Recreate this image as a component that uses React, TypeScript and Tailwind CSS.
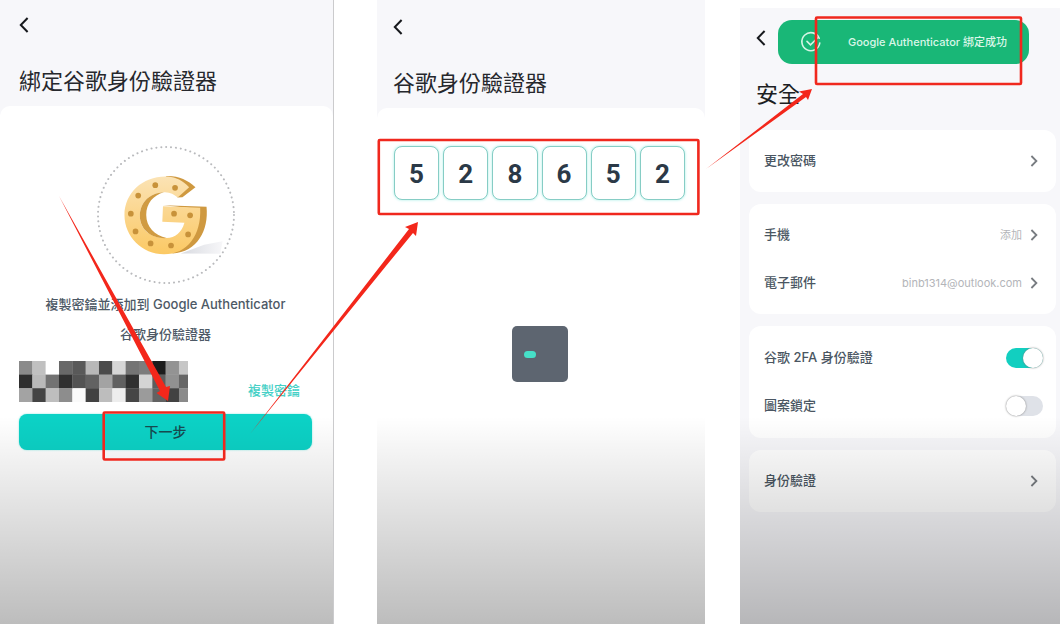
import { useState } from "react";

const studs = [
  [224, 151], [283, 159], [173, 182], [151, 236], [165, 289],
  [210, 325], [271, 331], [322, 298], [328, 241], [280, 236],
];

const mosaic = [
  ["#8a8a8a", "#c0c0c0", "#ffffff", "#686868", "#595959", "#b8b8b8", "#4b4b4b", "#d6d6d6", "#747474", "#7c7c7c", "#1c1c1c", "#939393", "#c6c6c6"],
  ["#2e2e2e", "#b9b9b9", "#727272", "#303030", "#535353", "#626262", "#a3a3a3", "#616161", "#303030", "#d4d4d4", "#5d5d5d", "#919191", "#666666"],
  ["#a3a3a3", "#444444", "#bebebe", "#8d8d8d", "#fafafa", "#424242", "#bdbdbd", "#ededed", "#464646", "#9b9b9b", "#626262", "#424242", "#8a8a8a"],
];

function BackButton() {
  return (
    <button type="button" aria-label="返回" className="block h-5 w-5">
      <svg viewBox="0 0 20 20" className="h-5 w-5" fill="none" stroke="#17191d" strokeWidth="2">
        <path d="M8.6 3 1.8 10l6.8 7" />
      </svg>
    </button>
  );
}

function Chevron() {
  return (
    <svg viewBox="0 0 8 12" className="h-3 w-2" fill="none" stroke="#777b80" strokeWidth="1.8" aria-hidden="true">
      <path d="m1.4 1 5 5-5 5" />
    </svg>
  );
}

function Shade() {
  return (
    <div className="pointer-events-none absolute inset-x-0 bottom-0 h-[208px] bg-linear-to-b from-black/0 to-black/26" />
  );
}

function GoogleBadge() {
  return (
    <svg viewBox="50 34 412 412" className="h-[138px] w-[138px]" role="img" aria-label="Google">
      <defs>
        <linearGradient id="face" x1="0" y1="0" x2="0" y2="1">
          <stop offset="0" stopColor="#fbe3b5" />
          <stop offset="0.5" stopColor="#fbd58b" />
          <stop offset="1" stopColor="#fbc964" />
        </linearGradient>
        <linearGradient id="cast" x1="0" y1="0" x2="1" y2="0">
          <stop offset="0" stopColor="#d8dae0" />
          <stop offset="1" stopColor="#f7f7f9" />
        </linearGradient>
      </defs>
      <circle cx="256" cy="240" r="203" fill="none" stroke="#b9babd" strokeWidth="6" strokeLinecap="round" strokeDasharray="0.1 14.6" />
      <path d="M300 355 L370 329 L425 318 L418 356 Z" fill="url(#cast)" />
      <path d="M255 124 C292 122 320 136 344 157 L305 187 L290 188 L300 160 Z" fill="#cf9940" />
      <path d="M247 211 L377 215 C384 285 350 350 275 355 L330 290 L355 222 Z" fill="#cf9940" />
      <path d="M262 125 C190 121 132 172 132 240 C132 305 185 357 250 357 C320 357 362 300 358 218 L247 214 L245 260 L311 263 C303 292 283 308 258 309 C212 310 178 285 178 243 C178 205 205 174 250 172 C267 171 280 178 291 188 L325 157 C305 137 286 127 262 125 Z" fill="url(#face)" />
      <path d="M250 172 C205 174 178 205 178 243 C178 285 215 312 258 309 C222 301 197 275 197 240 C197 205 218 181 250 172 Z" fill="#d09b42" />
      {studs.map(([x, y]) => (
        <circle key={`${x}-${y}`} cx={x} cy={y} r="8.5" fill="#c8923a" />
      ))}
    </svg>
  );
}

function MaskedKey() {
  return (
    <svg viewBox="0 0 169 41" className="h-[41px] w-[169px]" role="img" aria-label="密鑰">
      {mosaic.map((row, y) =>
        row.map((fill, x) => (
          <rect key={`${x}-${y}`} x={x * 13.33} y={y * 13.6} width="13.6" height="13.9" fill={fill} />
        )),
      )}
    </svg>
  );
}

function BindScreen() {
  return (
    <section className="relative col-start-1 row-start-1 flex flex-col border-r border-[#cbcbcd] bg-[#f7f7fa]">
      <header className="flex h-[106px] flex-col gap-[34px] pl-[19px] pt-[15px]">
        <BackButton />
        <h1 className="text-[22px] leading-6 text-[#26282d]">綁定谷歌身份驗證器</h1>
      </header>
      <div className="flex flex-1 flex-col rounded-t-[10px] bg-white pl-[19px] pr-[21px] pt-10">
        <div className="flex justify-center">
          <GoogleBadge />
        </div>
        <p className="mt-[5px] text-center text-[13px] font-medium leading-[30px] text-[#4d5966]">
          複製密鑰並添加到 Google Authenticator
          <br />
          谷歌身份驗證器
        </p>
        <div className="mt-3 flex items-end justify-between pr-3">
          <MaskedKey />
          <button type="button" className="h-6 text-[13px] font-medium leading-6 text-[#45d0c6]">複製密鑰</button>
        </div>
        <button type="button" className="mt-3 h-9 rounded-lg bg-[#0cd2c6] text-[14px] font-medium leading-9 text-[#164b50] shadow-[0_0_2px_#7ee6df]">
          下一步
        </button>
      </div>
      <Shade />
    </section>
  );
}

function CodeScreen() {
  const [code, setCode] = useState(["5", "2", "8", "6", "5", "2"]);
  return (
    <section className="relative col-start-3 row-start-1 flex flex-col bg-[#f7f7fa]">
      <header className="flex h-[108px] flex-col gap-[34px] pl-4 pt-[17px]">
        <BackButton />
        <h1 className="text-[22px] leading-6 text-[#26282d]">谷歌身份驗證器</h1>
      </header>
      <div className="flex flex-1 flex-col items-center rounded-t-[10px] bg-white pl-[17px] pr-5 pt-[38px]">
        <div className="grid w-full grid-cols-6 gap-1">
          {code.map((digit, i) => (
            <input
              key={i}
              aria-label={`驗證碼第 ${i + 1} 位`}
              inputMode="numeric"
              maxLength={1}
              value={digit}
              onChange={(e) => setCode(code.map((d, j) => (j === i ? e.target.value : d)))}
              className="h-[54px] w-full min-w-0 rounded-lg border border-[#86cdc5] bg-white pt-px text-center font-[Roboto,sans-serif] text-[26px] font-bold text-[#2b3947] shadow-[0_0_3px_#a5eee6] outline-none"
            />
          ))}
        </div>
        <div role="status" aria-label="載入中" className="mt-[126px] flex h-14 w-14 items-center rounded-[5px] bg-[#5d6570] pl-3">
          <div className="h-[7px] w-3 rounded-full bg-[#46e0c8]" />
        </div>
      </div>
      <Shade />
    </section>
  );
}

function LinkRow({ label, value }: { label: string; value?: string }) {
  return (
    <a href="#" className="flex h-12 items-center text-[13px] font-medium text-[#4a5662]">
      <span className="flex-1">{label}</span>
      <span className="mr-2 text-[11px] font-normal text-[#b3b5b9]">{value}</span>
      <Chevron />
    </a>
  );
}

function SwitchRow({ label, initial }: { label: string; initial: boolean }) {
  const [on, setOn] = useState(initial);
  return (
    <label className="flex h-12 items-center justify-between text-[13px] font-medium text-[#4a5662]">
      {label}
      <input
        type="checkbox"
        role="switch"
        checked={on}
        onChange={() => setOn(!on)}
        className="h-5 w-[37px] appearance-none rounded-full bg-[#dfe2e8] before:block before:h-5 before:w-5 before:rounded-full before:bg-white before:shadow-[0_0_2px_#777] checked:bg-[#12cfc0] checked:before:ml-[17px]"
      />
    </label>
  );
}

function SecurityScreen() {
  return (
    <section className="relative col-start-5 row-start-1 mt-2 flex flex-col bg-[#f7f7fa]">
      <header className="flex h-[122px] flex-col gap-[34px] pl-4 pt-5">
        <BackButton />
        <h1 className="text-[22px] leading-6 text-[#1d1f23]">安全</h1>
      </header>
      <div role="status" className="absolute left-[38px] right-[31px] top-3 flex h-11 items-center rounded-[14px] bg-[#19b777] pl-[22px] pr-[22px] text-[11px] font-medium text-[#d9f6e8]">
        <svg viewBox="0 0 22 22" className="h-[22px] w-[22px]" fill="none" stroke="#d5f5e5" strokeWidth="1.6" strokeLinecap="round" aria-hidden="true">
          <path d="M19.2 7.2A9 9 0 1 0 19.8 12" />
          <path d="m7 10.4 3.5 3.5 7.5-7.4" />
        </svg>
        <span className="flex-1 whitespace-nowrap text-right">Google Authenticator 綁定成功</span>
      </div>
      <div className="flex flex-col gap-3 pl-[9px] pr-1">
        <div className="rounded-xl bg-white py-[7px] pl-[15px] pr-[18px]">
          <LinkRow label="更改密碼" />
        </div>
        <div className="rounded-xl bg-white py-[7px] pl-[15px] pr-[18px]">
          <LinkRow label="手機" value="添加" />
          <LinkRow label="電子郵件" value="binb1314@outlook.com" />
        </div>
        <div className="rounded-xl bg-white py-2 pl-[15px] pr-[13px]">
          <SwitchRow label="谷歌 2FA 身份驗證" initial={true} />
          <SwitchRow label="圖案鎖定" initial={false} />
        </div>
        <div className="rounded-xl bg-white py-[7px] pl-[15px] pr-[18px]">
          <LinkRow label="身份驗證" />
        </div>
      </div>
      <Shade />
    </section>
  );
}

function Annotations() {
  return (
    <svg viewBox="0 0 1060 624" preserveAspectRatio="none" aria-hidden="true" className="pointer-events-none absolute left-0 top-0 h-[624px] w-full">
      <g fill="none" stroke="#f0281e" strokeWidth="2.6" strokeLinejoin="round">
        <rect x="103.7" y="412.5" width="120.5" height="47" rx="1" />
        <rect x="378.8" y="140" width="319.6" height="74" rx="1" />
        <rect x="816" y="17.5" width="205" height="66.5" rx="1" />
      </g>
      <g fill="#f3271b">
        <path d="M59 196 L166 387 L170 386 L168 401 L156.5 393 L160 391 Z" />
        <path d="M250 434 L409 229 L405 227 L418 222 L416 236 L413 233 L386 266 Z" />
        <path d="M706 169 L803 94 L799 91.5 L812 89 L808 100 L806 97 Z" />
      </g>
    </svg>
  );
}

export default function App() {
  return (
    <main className="relative grid min-h-screen grid-cols-[334fr_43fr_328fr_35fr_320fr] bg-white font-[Inter,'Noto_Sans_CJK_TC',sans-serif]">
      <BindScreen />
      <CodeScreen />
      <SecurityScreen />
      <Annotations />
    </main>
  );
}
